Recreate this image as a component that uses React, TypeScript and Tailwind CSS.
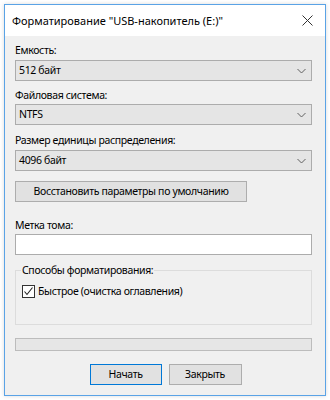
import React from "react";

const font = { fontFamily: '"Noto Sans", "Open Sans", sans-serif' };

const body = "text-[10.5px] tracking-[-0.35px] text-black";

function Chevron() {
  return (
    <svg width="9" height="6" viewBox="0 0 9 6" className="shrink-0">
      <path d="M0.5 1 L4.5 5 L8.5 1" fill="none" stroke="#606060" strokeWidth="1" />
    </svg>
  );
}

function Select({ value }: { value: string }) {
  return (
    <div className={"flex h-[21px] items-center justify-between border border-[#acacac] bg-[#e5e5e5] pl-[3px] pr-[5px] leading-none " + body}>
      <span>{value}</span>
      <Chevron />
    </div>
  );
}

function Label({ children, className = "" }: { children: React.ReactNode; className?: string }) {
  return <div className={"h-[16px] whitespace-nowrap leading-[16px] " + body + " " + className}>{children}</div>;
}

export default function App() {
  return (
    <div className="h-[400px] w-[330px] bg-white pl-[4px] pt-[4px]" style={font}>
      <div className="flex h-[392px] w-[322px] flex-col border border-[#5aa3e6] bg-[#f0f0f0] shadow-[0_0_4px_rgba(0,0,0,0.15)]">
        <div className="flex h-[31px] shrink-0 items-center justify-between bg-white pl-[7px] pr-[12px]">
          <span className="whitespace-nowrap text-[11px] leading-none text-black">Форматирование "USB-накопитель (E:)"</span>
          <svg width="11" height="11" viewBox="0 0 11 11">
            <path d="M0.5 0.5 L10.5 10.5 M10.5 0.5 L0.5 10.5" stroke="#333" strokeWidth="1" fill="none" />
          </svg>
        </div>
        <div className="flex flex-col pl-[10px] pr-[13px]">
          <Label className="mt-[6px]">Емкость:</Label>
          <div className="mt-[2px]">
            <Select value="512 байт" />
          </div>
          <Label className="mt-[6px]">Файловая система:</Label>
          <div className="mt-[1px]">
            <Select value="NTFS" />
          </div>
          <Label className="mt-[7px]">Размер единицы распределения:</Label>
          <div className="mt-[2px]">
            <Select value="4096 байт" />
          </div>
          <div className={"mt-[10px] flex h-[21px] w-[232px] items-center justify-center whitespace-nowrap border border-[#adadad] bg-[#e1e1e1] leading-none " + body}>
            Восстановить параметры по умолчанию
          </div>
          <Label className="mt-[15px]">Метка тома:</Label>
          <div className="mt-[1px] h-[21px] border border-[#acacac] bg-white" />
          <div className="relative mt-[15px] h-[55px] border border-[#dcdcdc]">
            <span className={"absolute left-[5px] top-[-9px] whitespace-nowrap bg-[#f0f0f0] px-[1px] leading-[16px] " + body}>
              Способы форматирования:
            </span>
            <div className="ml-[6px] mt-[14px] flex items-center">
              <div className="flex h-[13px] w-[13px] items-center justify-center border border-[#333] bg-white">
                <svg width="11" height="11" viewBox="0 0 11 11">
                  <path d="M1.5 5.5 L4 8.5 L9.5 1.5" stroke="#222" strokeWidth="1.1" fill="none" />
                </svg>
              </div>
              <span className={"ml-[3px] whitespace-nowrap leading-none " + body}>Быстрое (очистка оглавления)</span>
            </div>
          </div>
          <div className="mt-[13px] h-[13px] border border-[#bcbcbc] bg-[#e6e6e6]" />
          <div className="mt-[13px] flex justify-center gap-[7px] pl-[4px]">
            <div className={"flex h-[21px] w-[72px] items-center justify-center border border-[#0078d7] bg-[#e1e1e1] leading-none " + body}>
              Начать
            </div>
            <div className={"flex h-[21px] w-[73px] items-center justify-center border border-[#adadad] bg-[#e1e1e1] leading-none " + body}>
              Закрыть
            </div>
          </div>
        </div>
      </div>
    </div>
  );
}
